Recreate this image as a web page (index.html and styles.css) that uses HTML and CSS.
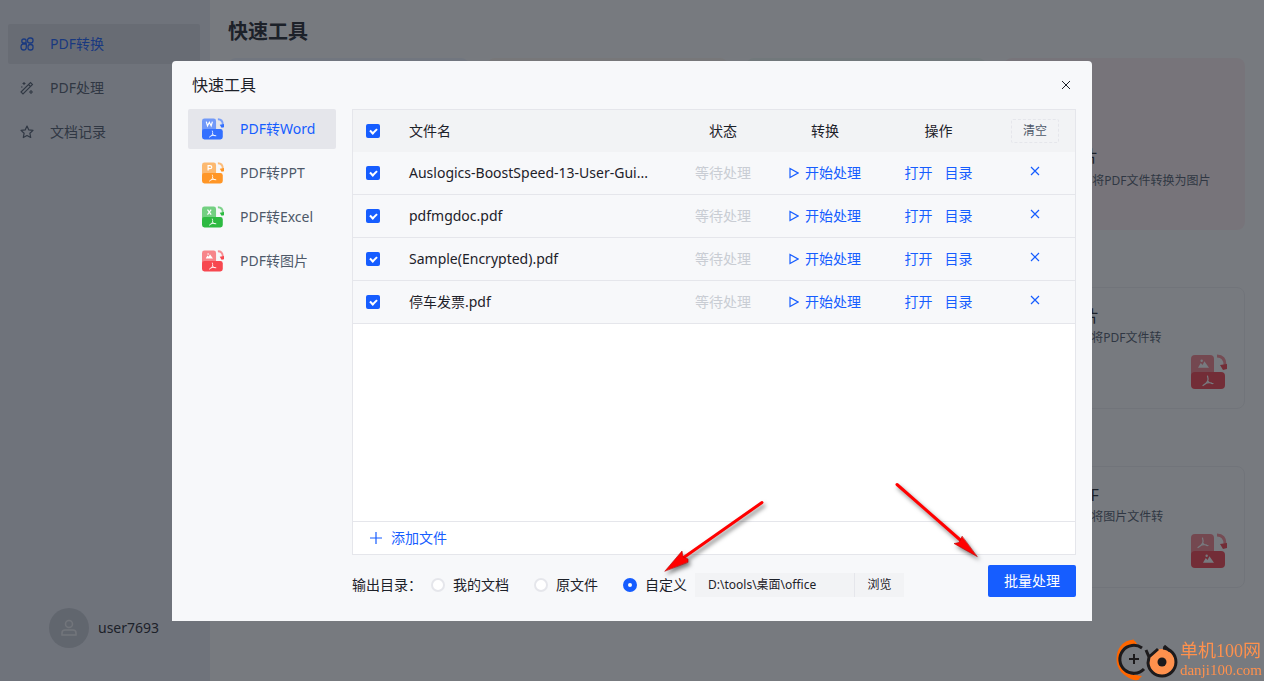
FILE: index.html
```html
<!DOCTYPE html>
<html lang="zh-CN">
<head>
<meta charset="utf-8">
<title>快速工具</title>
<link rel="stylesheet" href="styles.css">
</head>
<body>
<svg class="defs" width="0" height="0" aria-hidden="true">
  <defs>
    <symbol id="swap" viewBox="0 0 36 36">
      <rect x="0" y="1" width="23" height="24" rx="4" fill="currentColor" opacity=".65"/>
      <rect x="0" y="18" width="34" height="17" rx="4" fill="currentColor"/>
      <path d="M26 2c5 0 8 3 8 9" fill="none" stroke="currentColor" stroke-opacity=".6" stroke-width="3"/>
      <path d="M29 11l7-1v5l-4 1z" fill="currentColor"/>
    </symbol>
    <symbol id="acro" viewBox="0 0 12 12"><path d="M5.500 1q1 3 .2 5T1 10.500M5.700 6Q8 9 11 8.500M3.500 8.500q3-1.500 6-.5" fill="none" stroke="currentColor" stroke-width="1.200" stroke-linecap="round"/></symbol>
    <symbol id="mount" viewBox="0 0 12 10"><path d="M0 9l3-5 2 2 2-4 5 7z" fill="currentColor"/><circle cx="4" cy="1.500" r="1.300" fill="currentColor"/></symbol>
    <symbol id="play" viewBox="0 0 10 12"><path d="M1 1.500v9L9 6z" fill="none" stroke="currentColor" stroke-width="1.200"/></symbol>
    <symbol id="cross" viewBox="0 0 10 10"><path d="M1 1l8 8M9 1l-8 8" fill="none" stroke="currentColor" stroke-width="1.200"/></symbol>
  </defs>
</svg>
<div class="app">
  <aside class="sidebar">
    <nav class="nav">
      <a class="nav-item active" href="#"><svg width="14" height="14" viewBox="0 0 14 14" fill="none" stroke="currentColor" stroke-width="1.300"><path d="M6 6V3.500Q6 2 4 2Q1.800 2 1.800 4T3.500 6zM6.300 7H3.500Q1 7 1 10t2.700 3q2.600 0 2.600-3z"/><rect x="7.500" y="1" width="5.500" height="5" rx="2.200"/><rect x="8" y="7.500" width="5" height="5.500" rx="2.200"/></svg>PDF转换</a>
      <a class="nav-item" href="#"><svg width="14" height="14" viewBox="0 0 14 14" fill="none" stroke="currentColor" stroke-width="1.100"><path d="M1 11L10.500 1.500l2 2L3 13zM8.500 3.500l2 2"/><path d="M4 1v3M2.500 2.500h3M11 9v4M9 11h4M1 6h1.500"/></svg>PDF处理</a>
      <a class="nav-item" href="#"><svg width="14" height="14" viewBox="0 0 14 14" fill="none" stroke="currentColor" stroke-width="1.200" stroke-linejoin="round"><path d="M7 1l1.800 3.900 4.200.500-3.100 2.900.8 4.200L7 10.500l-3.700 2 .8-4.200L1 5.400l4.200-.500z"/></svg>文档记录</a>
    </nav>
    <div class="user"><span class="avatar"><svg width="18" height="18" viewBox="0 0 18 18" fill="none" stroke="currentColor" stroke-width="1.500"><circle cx="9" cy="5" r="3.500"/><path d="M2 16v-2q0-3 3-3h8q3 0 3 3v2z"/></svg></span>user7693</div>
  </aside>
  <main class="main">
    <h1 class="page-title">快速工具</h1>
    <section class="cards cards-hero">
      <div class="card c-blue"></div><div class="card c-orange"></div><div class="card c-green"></div>
      <div class="card c-red"><h2>PDF转图片</h2><p>将PDF文件转换为图片</p></div>
    </section>
    <section class="cards">
      <div class="card"></div><div class="card"></div><div class="card"></div>
      <div class="card"><h2>PDF转图片</h2><p>将PDF文件转</p>
        <svg class="card-icon" width="36" height="36" viewBox="0 0 36 36"><use href="#swap"/><use href="#mount" class="white" x="7" y="5" width="11" height="10"/><use href="#acro" class="white" x="11" y="21" width="12" height="12"/></svg></div>
    </section>
    <section class="cards">
      <div class="card"></div><div class="card"></div><div class="card"></div>
      <div class="card"><h2>图片转PDF</h2><p>将图片文件转</p>
        <svg class="card-icon" width="36" height="36" viewBox="0 0 36 36"><use href="#swap"/><use href="#acro" class="white" x="6" y="4" width="12" height="12"/><use href="#mount" class="white" x="12" y="21" width="11" height="10"/></svg></div>
    </section>
  </main>
</div>

<div class="overlay">
  <div class="dialog" role="dialog" aria-labelledby="dialog-title">
    <header class="dialog-head"><h2 id="dialog-title">快速工具</h2><button class="close" aria-label="关闭"><svg width="10" height="10" viewBox="0 0 10 10"><path d="M1 1l8 8M9 1l-8 8" stroke="currentColor"/></svg></button></header>
    <div class="dialog-body">
      <nav class="tools">
        <a class="tool active" href="#"><svg class="blue" width="22" height="22" viewBox="0 0 36 36"><use href="#swap"/><path d="M7 6l2 7 3-6 3 6 2-7" fill="none" stroke="#fff" stroke-width="2"/><use href="#acro" class="white" x="11" y="20" width="13" height="13"/></svg>PDF转Word</a>
        <a class="tool" href="#"><svg class="orange" width="22" height="22" viewBox="0 0 36 36"><use href="#swap"/><path d="M10 14V6h3q3 0 3 2.500T13 11h-3" fill="none" stroke="#fff" stroke-width="2"/><use href="#acro" class="white" x="11" y="20" width="13" height="13"/></svg>PDF转PPT</a>
        <a class="tool" href="#"><svg class="green" width="22" height="22" viewBox="0 0 36 36"><use href="#swap"/><path d="M9 6l6 8M15 6l-6 8" fill="none" stroke="#fff" stroke-width="2"/><use href="#acro" class="white" x="11" y="20" width="13" height="13"/></svg>PDF转Excel</a>
        <a class="tool" href="#"><svg class="red" width="22" height="22" viewBox="0 0 36 36"><use href="#swap"/><use href="#mount" class="white" x="6" y="5" width="12" height="10"/><use href="#acro" class="white" x="11" y="20" width="13" height="13"/></svg>PDF转图片</a>
      </nav>
      <div class="work">
        <div class="panel">
          <table class="files">
            <colgroup><col class="w-check"><col><col class="w-status"><col class="w-convert"><col class="w-ops"><col class="w-clear"></colgroup>
            <thead><tr><th><input type="checkbox" class="check" aria-label="全选" checked></th><th class="name">文件名</th><th>状态</th><th>转换</th><th>操作</th><th><button class="clear">清空</button></th></tr></thead>
            <tbody>
              <tr><td><input type="checkbox" class="check" aria-label="选择文件" checked></td><td class="name">Auslogics-BoostSpeed-13-User-Gui...</td><td class="wait">等待处理</td><td><button class="link"><svg width="10" height="12"><use href="#play"/></svg>开始处理</button></td><td><a class="link" href="#">打开</a><a class="link" href="#">目录</a></td><td><button class="link del" aria-label="删除"><svg width="10" height="10"><use href="#cross"/></svg></button></td></tr>
              <tr><td><input type="checkbox" class="check" aria-label="选择文件" checked></td><td class="name">pdfmgdoc.pdf</td><td class="wait">等待处理</td><td><button class="link"><svg width="10" height="12"><use href="#play"/></svg>开始处理</button></td><td><a class="link" href="#">打开</a><a class="link" href="#">目录</a></td><td><button class="link del" aria-label="删除"><svg width="10" height="10"><use href="#cross"/></svg></button></td></tr>
              <tr><td><input type="checkbox" class="check" aria-label="选择文件" checked></td><td class="name">Sample(Encrypted).pdf</td><td class="wait">等待处理</td><td><button class="link"><svg width="10" height="12"><use href="#play"/></svg>开始处理</button></td><td><a class="link" href="#">打开</a><a class="link" href="#">目录</a></td><td><button class="link del" aria-label="删除"><svg width="10" height="10"><use href="#cross"/></svg></button></td></tr>
              <tr><td><input type="checkbox" class="check" aria-label="选择文件" checked></td><td class="name">停车发票.pdf</td><td class="wait">等待处理</td><td><button class="link"><svg width="10" height="12"><use href="#play"/></svg>开始处理</button></td><td><a class="link" href="#">打开</a><a class="link" href="#">目录</a></td><td><button class="link del" aria-label="删除"><svg width="10" height="10"><use href="#cross"/></svg></button></td></tr>
            </tbody>
          </table>
          <button class="add"><svg width="12" height="12" viewBox="0 0 12 12"><path d="M6 0v12M0 6h12" stroke="currentColor" stroke-width="1.200"/></svg>添加文件</button>
        </div>
        <form class="output">
          <span class="output-label">输出目录：</span>
          <label class="radio"><input type="radio" name="dir">我的文档</label>
          <label class="radio"><input type="radio" name="dir">原文件</label>
          <label class="radio"><input type="radio" name="dir" checked>自定义</label>
          <input class="path" type="text" aria-label="输出路径" value="D:\tools\桌面\office">
          <button class="browse" type="button">浏览</button>
          <button class="batch" type="button">批量处理</button>
        </form>
      </div>
    </div>
    <svg class="arrows" width="920" height="560" viewBox="172 61 920 560" aria-hidden="true"><g fill="#f00" stroke="#f00" stroke-linecap="round"><path d="M762 502.500L683 558M897 484.500l65 57" stroke-width="3"/><path d="M665 571l17-20 1 6 5 2v3zM977 556.500l-23-13 5-1 3-6z" stroke="#b00" stroke-width=".6"/></g></svg>
  </div>
</div>

<div class="brand">
  <svg width="66" height="42" viewBox="0 0 66 42" fill="none"><path d="M20 2C8 3 4 12 4 20s5 18 21 19" stroke="#f60" stroke-width="3"/><path d="M10 6q5-6 11-4l2 3-10 3zM12 37q6 5 12 4l4-4-14-2z" fill="#f60"/><path d="M28 9A14 14 0 1 0 30 30" stroke="#1c1a1c" stroke-width="3"/><path d="M20 15v10M15 20h10" stroke="#1c1a1c" stroke-width="2"/><circle cx="48" cy="23" r="13" fill="#ff914d"/><path d="M32 11l3 7-1 6a14 14 0 1 0 15-15M50 7l6 5M44 10l-9 8" stroke="#1c1a1c" stroke-width="3"/><circle cx="48" cy="23" r="4.500" fill="#1c1a1c"/></svg>
  <div class="brand-text"><span class="brand-name">单机100网</span><span class="brand-url">danji100.com</span></div>
</div>
</body>
</html>
```
FILE: styles.css
```css
*, *::after { box-sizing: border-box; }
body { margin: 0; font: 14px/20px "Noto Sans", "Noto Sans CJK SC", sans-serif; color: #1d2129; }
button, input { font: inherit; color: inherit; margin: 0; }
button { border: 0; background: none; padding: 0; cursor: pointer; }
a { color: inherit; text-decoration: none; }
h1, h2, p { margin: 0; font-weight: 400; }
svg { flex: none; }
.defs { position: absolute; }

.app { display: flex; min-height: 100vh; background: #fff; }
.sidebar { width: 210px; padding: 24px 10px 33px 8px; background: #eaedf6; display: flex; flex-direction: column; justify-content: space-between; }
.nav { display: flex; flex-direction: column; gap: 4px; }
.nav-item { display: flex; align-items: center; gap: 16px; height: 40px; padding-left: 12px; border-radius: 2px; color: #4e5969; }
.nav-item.active { background: #dadce4; color: #165dff; }
.user { display: flex; align-items: center; gap: 9px; padding-left: 41px; }
.avatar { display: flex; align-items: center; justify-content: center; width: 40px; height: 40px; border-radius: 50%; background: #c9cdd4; color: #f2f3f5; }

.main { flex: 1; padding: 18px 19px 0 18px; }
.page-title { font-size: 20px; line-height: 28px; font-weight: 700; margin-bottom: 12px; }
.cards { display: grid; grid-template-columns: repeat(4, 1fr); gap: 18px; margin-bottom: 57px; }
.card { position: relative; height: 122px; padding: 16px; border: 1px solid #f0f0f3; border-radius: 8px; }
.cards-hero .card { height: 172px; padding-top: 86px; border: 0; }
.card h2 { font-size: 16px; line-height: 24px; }
.card p { font-size: 12px; line-height: 20px; padding-left: 70px; color: #4e5969; white-space: nowrap; }
.cards-hero p { padding: 3px 0 0 72px; }
.card-icon { position: absolute; right: 17px; bottom: 18px; color: #f53f4b; }
.c-blue { background: #f0f5ff; }
.c-orange { background: #fff8f0; }
.c-green { background: #f0fbf4; }
.c-red { background: #fff1f3; }

.overlay { position: fixed; inset: 0; display: flex; align-items: center; justify-content: center; background: rgba(29, 33, 41, .6); }
.dialog { position: relative; display: flex; flex-direction: column; width: 920px; min-height: 560px; background: #f7f8fa; border-radius: 4px 4px 0 0; }
.dialog-head { display: flex; align-items: center; justify-content: space-between; height: 48px; padding: 0 20px; }
.dialog-head h2 { font-size: 16px; line-height: 24px; }
.close { display: flex; padding: 1px; }
.dialog-body { flex: 1; display: flex; gap: 16px; padding: 0 16px 24px; }
.tools { width: 148px; display: flex; flex-direction: column; gap: 4px; }
.tool { display: flex; align-items: center; gap: 16px; height: 40px; padding-left: 14px; border-radius: 2px; color: #4e5969; }
.tool.active { background: #e5e6eb; color: #165dff; }
.blue { color: #3370ff; }
.orange { color: #ff9626; }
.green { color: #2dba41; }
.red { color: #f7474f; }
.white { color: #fff; }

.work { flex: 1; display: flex; flex-direction: column; gap: 10px; min-width: 0; }
.panel { flex: 1; display: flex; flex-direction: column; justify-content: space-between; border: 1px solid #e5e6eb; background: #fff; }
.files { width: 100%; table-layout: fixed; border-collapse: separate; border-spacing: 0; }
.w-check { width: 40px; }
.w-status { width: 90px; }
.w-convert { width: 114px; }
.w-ops { width: 113px; }
.w-clear { width: 80px; }
.files th { height: 42px; padding: 0; font-weight: 400; background: #f2f3f5; }
.files td { height: 43px; padding: 0; text-align: center; background: #f7f8fa; border-bottom: 1px solid #e5e6eb; }
.files .name { padding: 0 16px; text-align: left; white-space: nowrap; }
.files .wait { color: #c9cdd4; }
.check { appearance: none; display: block; width: 14px; height: 14px; margin: 0 auto; border-radius: 2px; background: #165dff; }
.check::after { content: ""; display: block; width: 7px; height: 5px; margin: 4px 0 0 4px; border-left: 2px solid #fff; border-bottom: 2px solid #fff; transform: rotate(-45deg); }
.clear { width: 48px; height: 24px; border: 1px dashed #e5e6eb; border-radius: 2px; font-size: 12px; line-height: 18px; color: #4e5969; }
.link { color: #165dff; }
.link svg { margin-right: 6px; vertical-align: -1px; }
.link + .link { margin-left: 12px; }
.link.del svg { margin: 0; vertical-align: 2px; }
.add { display: flex; align-items: center; gap: 9px; height: 33px; padding-left: 17px; border-top: 1px solid #e5e6eb; color: #165dff; }

.output { display: flex; align-items: flex-end; height: 32px; line-height: 24px; }
.output-label { width: 79px; white-space: nowrap; }
.radio { display: flex; align-items: center; gap: 8px; margin-right: 25px; white-space: nowrap; }
.radio input { appearance: none; width: 14px; height: 14px; border: 2px solid #e5e6eb; border-radius: 50%; background: #fff; }
.radio input:checked { border: 5px solid #165dff; }
.radio:nth-of-type(3) { margin-right: 8px; }
.path { width: 159px; height: 24px; padding: 0 13px; border: 0; background: #f2f3f5; font-size: 12px; }
.browse { width: 50px; height: 24px; border-left: 1px solid #e5e6eb; background: #f2f3f5; font-size: 12px; }
.batch { width: 88px; height: 32px; margin-left: auto; border-radius: 2px; background: #165dff; color: #fff; }

.arrows { position: absolute; top: 0; left: 0; pointer-events: none; filter: drop-shadow(2px 3px 2px rgba(0, 0, 0, .5)); }
.brand { position: fixed; right: 2px; bottom: 0; display: flex; align-items: center; color: #ff914d; }
.brand-text { display: flex; flex-direction: column; font-family: "Liberation Serif", "Noto Sans CJK SC", serif; }
.brand-name { font-size: 18px; line-height: 20px; }
.brand-url { font-size: 15px; line-height: 18px; }
```
